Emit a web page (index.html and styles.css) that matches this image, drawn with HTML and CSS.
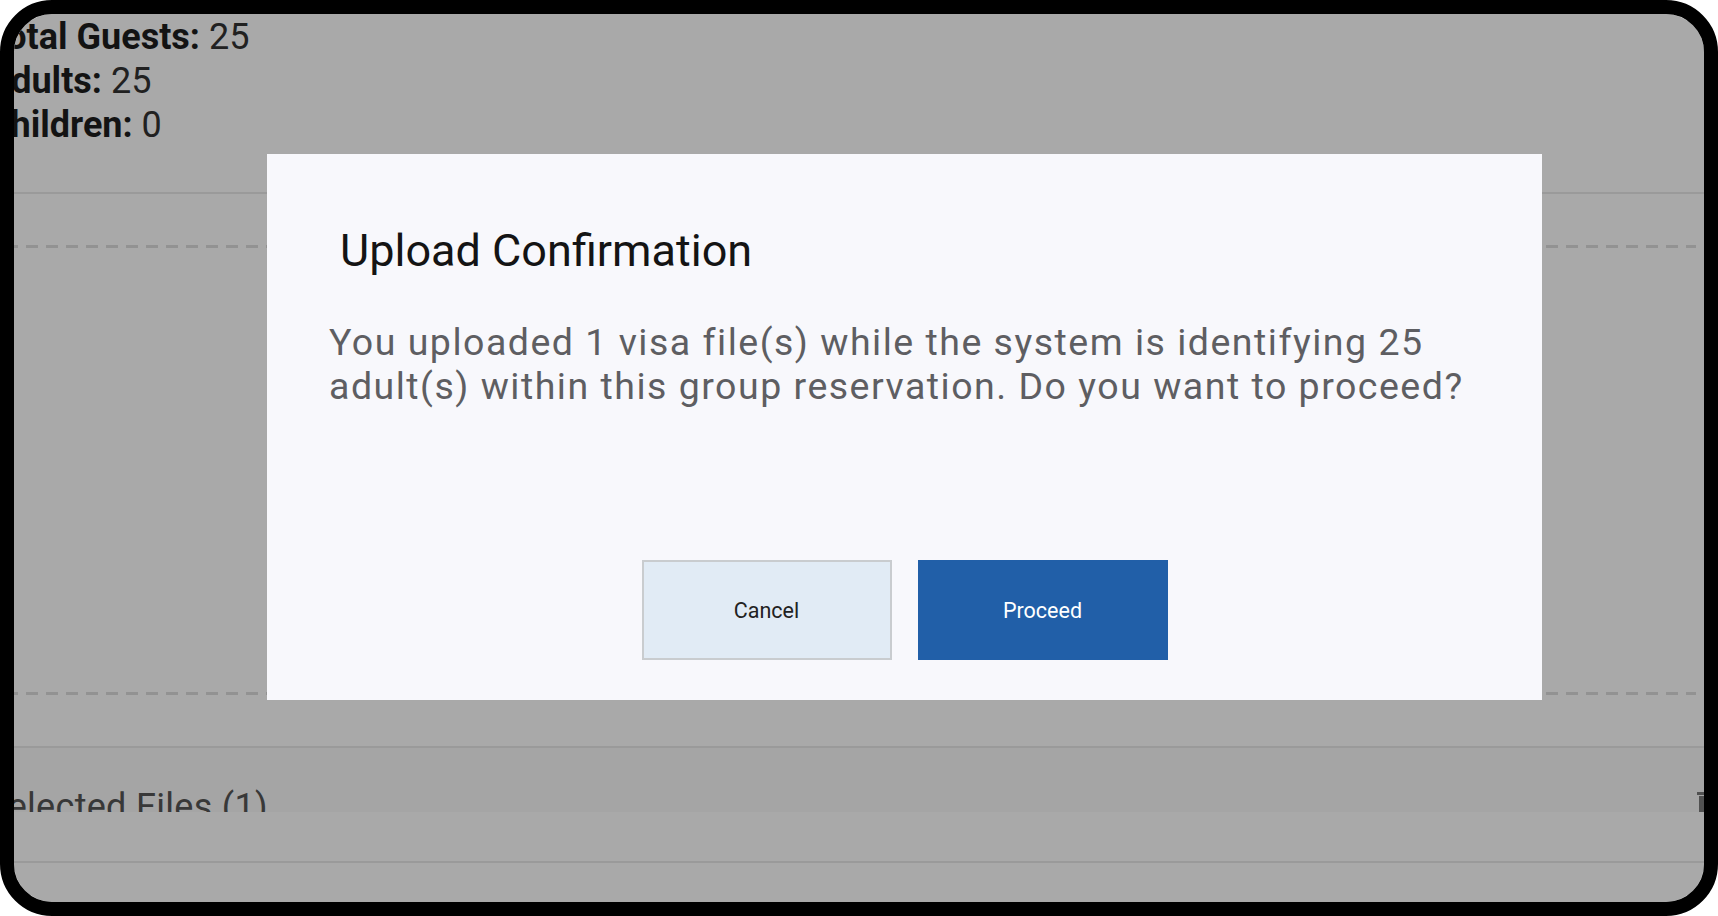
FILE: index.html
```html
<!DOCTYPE html>
<html lang="en">
<head>
<meta charset="utf-8">
<title>Group Reservation – Visa Upload</title>
<link rel="stylesheet" href="styles.css">
</head>
<body>
<div class="device">
  <main class="page">
    <section class="summary">
      <p class="summary-line"><span class="label">Total Guests:</span> 25</p>
      <p class="summary-line"><span class="label">Adults:</span> 25</p>
      <p class="summary-line"><span class="label">Children:</span> 0</p>
    </section>
    <hr class="divider divider-top">
    <section class="dropzone"></section>
    <hr class="divider divider-files">
    <div class="files-header">
      <span class="files-title">Selected Files (1)</span>
      <svg class="trash" width="22" height="26" viewBox="0 0 22 26" aria-hidden="true">
        <rect x="7" y="0" width="8" height="2" fill="#7a7a7a"/>
        <rect x="0" y="2" width="22" height="3" fill="#7a7a7a"/>
        <rect x="2" y="6" width="18" height="20" fill="#7a7a7a"/>
      </svg>
    </div>
    <div class="files-list"></div>
    <hr class="divider">
  </main>

  <div class="backdrop"></div>

  <div class="modal" role="dialog" aria-labelledby="modal-title">
    <h2 class="modal-title" id="modal-title">Upload Confirmation</h2>
    <p class="modal-text">You uploaded 1 visa file(s) while the system is identifying 25 adult(s) within this group reservation. Do you want to proceed?</p>
    <div class="modal-actions">
      <button class="btn btn-cancel" type="button">Cancel</button>
      <button class="btn btn-proceed" type="button">Proceed</button>
    </div>
  </div>
</div>
</body>
</html>
```

FILE: styles.css
```css
* {
  box-sizing: border-box;
}

html, body {
  margin: 0;
  padding: 0;
  background: #ffffff;
}

body {
  font-family: Roboto, "Liberation Sans", Arial, sans-serif;
  width: 1718px;
  height: 916px;
  overflow: hidden;
}

/* rounded black device frame */
.device {
  position: relative;
  width: 1718px;
  height: 916px;
  border: 14px solid #000;
  border-radius: 52px;
  overflow: hidden;
  background: #fff;
}

/* underlying page, scrolled a little to the right */
.page {
  display: flex;
  flex-direction: column;
  height: 100%;
}

.summary {
  padding-top: 1px;
  margin-left: -27px;
}

.summary-line {
  margin: 0;
  font-size: 36px;
  line-height: 44px;
  color: #333;
}

.label {
  font-weight: 700;
  color: #1e1e1e;
}

.divider {
  border: 0;
  margin: 0;
  height: 2px;
  background: #e8e8e8;
  flex: none;
}

.divider-top {
  margin-top: 45px;
}

.dropzone {
  flex: none;
  margin-top: 51px;
  height: 450px;
  background:
    repeating-linear-gradient(to right, #dcdcdc 0 12px, transparent 12px 20px) top left / 100% 3px no-repeat,
    repeating-linear-gradient(to right, #dcdcdc 0 12px, transparent 12px 20px) bottom left / 100% 3px no-repeat;
  background-position: -8px 0, -8px 100%;
}

.divider-files {
  margin-top: 51px;
}

.files-header {
  flex: none;
  height: 64px;
  overflow: hidden;
  display: flex;
  justify-content: space-between;
  align-items: flex-start;
  margin-left: -28px;
  margin-right: -30px;
  padding-right: 15px;
  background: #f9f9f9;
}

.files-title {
  padding-top: 37px;
  font-size: 36px;
  line-height: 44px;
  letter-spacing: 0.3px;
  color: #555;
}

.trash {
  margin-top: 42px;
  flex: none;
}

.files-list {
  flex: none;
  height: 49px;
  background: #fff;
}

/* dimmed layer behind the dialog */
.backdrop {
  position: absolute;
  inset: 0;
  background: rgba(0, 0, 0, 0.337);
}

.modal {
  position: absolute;
  left: 253px;
  top: 140px;
  width: 1275px;
  height: 546px;
  background: #f8f8fc;
  padding: 70px 62px 40px;
  display: flex;
  flex-direction: column;
}

.modal-title {
  margin: 0;
  padding-left: 11px;
  font-size: 45px;
  line-height: 54px;
  font-weight: 400;
  color: #141414;
}

.modal-text {
  margin: 42px 0 0;
  font-size: 37.5px;
  line-height: 44px;
  letter-spacing: 1.5px;
  color: #5e5e62;
}

.modal-actions {
  margin-top: auto;
  display: flex;
  justify-content: center;
  gap: 26px;
}

.btn {
  width: 250px;
  height: 100px;
  font-family: Roboto, "Liberation Sans", Arial, sans-serif;
  font-size: 21.5px;
  cursor: pointer;
}

.btn-cancel {
  background: #e1ebf5;
  border: 2px solid #c9cccf;
  color: #222;
}

.btn-proceed {
  background: #215fa8;
  border: 0;
  color: #fff;
}
```
